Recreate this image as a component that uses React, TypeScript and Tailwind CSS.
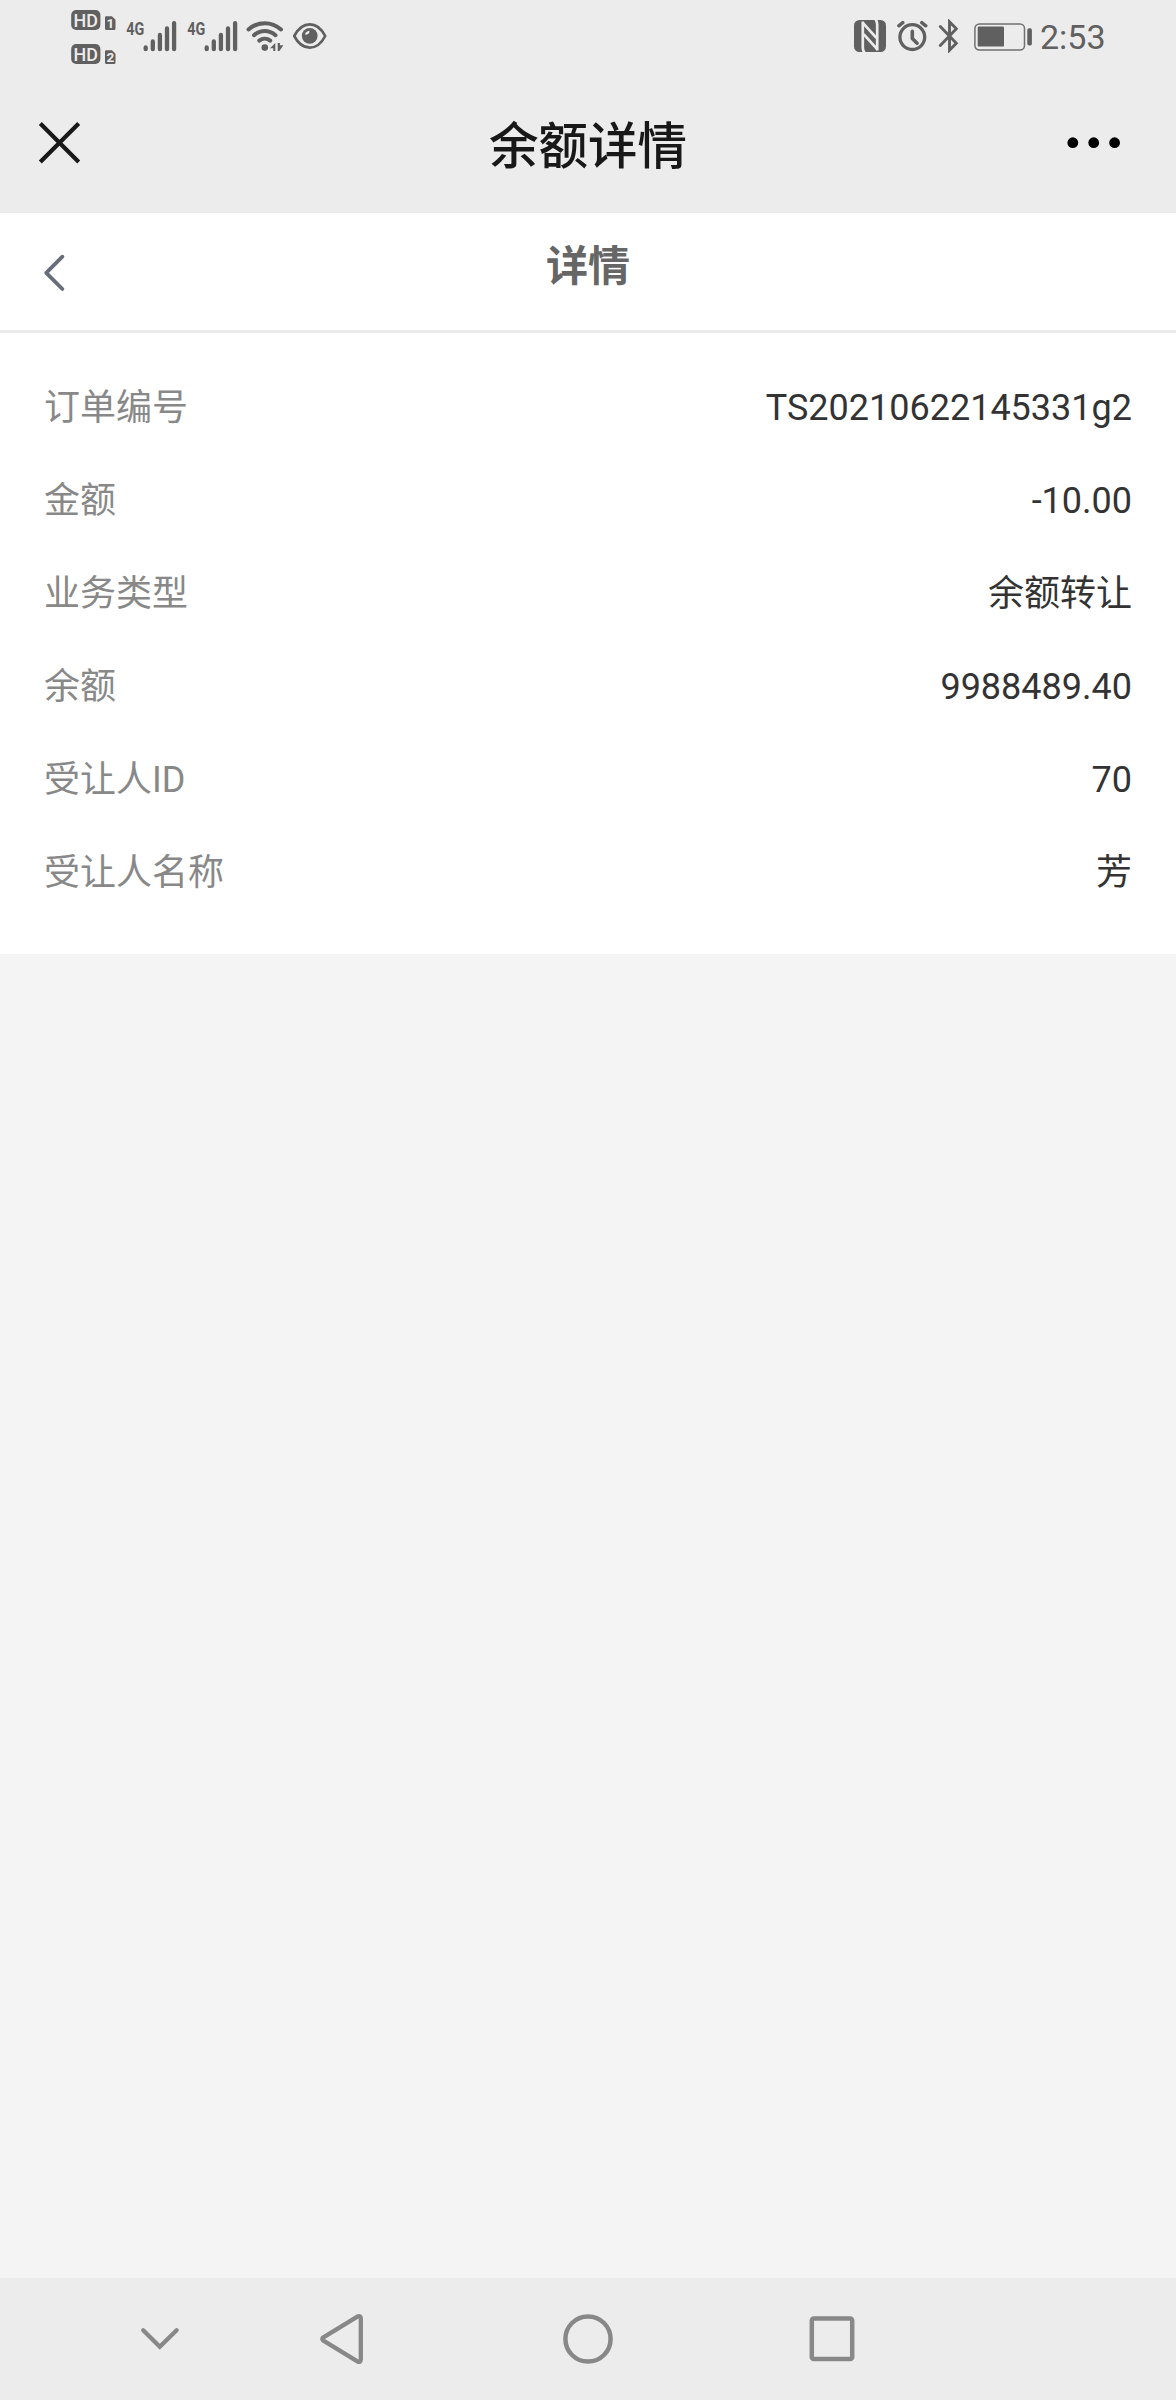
const details = [
  { label: "订单编号", value: "TS20210622145331g2" },
  { label: "金额", value: "-10.00" },
  { label: "业务类型", value: "余额转让" },
  { label: "余额", value: "9988489.40" },
  { label: "受让人ID", value: "70" },
  { label: "受让人名称", value: "芳" },
];

function HdBadge({ sim }: { sim: string }) {
  return (
    <svg width="46" height="21" viewBox="0 0 46 21" className="block overflow-visible">
      <rect x="0.2" y="0" width="29.2" height="20" rx="5" fill="#606060" />
      <text x="14.8" y="16.8" textAnchor="middle" textLength="24.4" lengthAdjust="spacingAndGlyphs" fontFamily="Roboto" fontWeight="500" fontSize="19" fill="#ececec">HD</text>
      <path d="M34 7.5q0-1.3 1.3-1.3h5.6l3.6 3.6v8.8q0 1.5-1.5 1.5h-7.5q-1.5 0-1.5-1.5z" fill="#606060" />
      <text x="39.3" y="18" textAnchor="middle" fontFamily="Roboto" fontWeight="700" fontSize="13.5" fill="#ececec">{sim}</text>
    </svg>
  );
}

function Signal() {
  return (
    <svg width="52" height="34" viewBox="0 0 52 34" className="block overflow-visible">
      <text x="0.3" y="14.8" textLength="18" lengthAdjust="spacingAndGlyphs" fontFamily="Roboto" fontWeight="700" fontSize="18.5" fill="#606060">4G</text>
      <g stroke="#606060" strokeWidth="4.3" strokeLinecap="round">
        <path d="M19.7 27.5v1.7M26.8 21.4v7.8M33.9 15v14.2M41 8.4v20.8M48.1 3.1v26.1" />
      </g>
    </svg>
  );
}

function WifiIcon() {
  return (
    <svg width="38" height="34" viewBox="246 20 38 34" className="block" fill="none">
      <g stroke="#606060" strokeWidth="4" strokeLinecap="round">
        <path d="M248.5 29.5C258 21 271.5 21 281 29.5" />
        <path d="M254 35.2C260.5 29.7 269 29.7 275.5 35.2" />
        <path d="M259.2 40.6C262.5 38 267 38 270.3 40.6" />
      </g>
      <circle cx="264.8" cy="47.6" r="3.3" fill="#606060" />
      <path d="M270 48.2l5.3-5.2v8h-2v-2.8zM277.7 43l2.2 0 0 2.2h3.5l-4 5.8h-1.7z" fill="#606060" />
    </svg>
  );
}

function EyeIcon() {
  return (
    <svg width="34" height="34" viewBox="293 19 34 34" className="block" fill="none">
      <path d="M294.2 36C302.3 20.5 317.3 20.5 325.2 36C317.3 51.5 302.3 51.5 294.2 36Z" stroke="#606060" strokeWidth="2.7" strokeLinejoin="round" />
      <circle cx="309.7" cy="35.8" r="7.9" fill="#606060" />
      <path d="M305 34.6C305.4 32.3 307 31.2 309.4 30.8C309.9 33 307.6 35.2 305 34.6Z" fill="#ececec" />
    </svg>
  );
}

function NfcIcon() {
  return (
    <svg width="32" height="32" viewBox="0 0 32 32" className="block">
      <rect width="32" height="32" rx="5.5" fill="#606060" />
      <g fill="none" stroke="#ececec" strokeWidth="2.7">
        <path d="M8.8 1.5V27.5Q8.8 30.5 10.6 33" />
        <path d="M23.2 30.5V4.5Q23.2 1.5 21.4 -1" />
        <path d="M8.6 2.6L22.4 17.8" />
        <path d="M9.6 14.2L23.4 29.4" />
      </g>
    </svg>
  );
}

function AlarmIcon() {
  return (
    <svg width="32" height="32" viewBox="0 0 32 32" className="block" fill="none" stroke="#606060" strokeLinecap="round" strokeLinejoin="round">
      <circle cx="15.3" cy="17.1" r="12.4" strokeWidth="3.3" />
      <path d="M15.3 11.4v7l4.8 4.8" strokeWidth="3.6" />
      <path d="M1.8 5.8L5.8 2.6M28.8 5.8L24.8 2.6" strokeWidth="3.4" />
    </svg>
  );
}

function BluetoothIcon() {
  return (
    <svg width="22" height="34" viewBox="0 0 22 34" className="block" fill="none" stroke="#606060" strokeWidth="2.9" strokeLinecap="round">
      <path d="M2.3 7.6L18.3 24.2L11.5 31.2V2.8L18.3 9.8L2.3 26.4" />
    </svg>
  );
}

function BatteryIcon() {
  return (
    <svg width="59" height="28" viewBox="0 0 59 28" className="block">
      <rect x="0.9" y="0.9" width="49.6" height="26.2" rx="4.5" fill="none" stroke="#707070" strokeWidth="1.5" />
      <rect x="3.7" y="3.6" width="26.3" height="20" rx="1.2" fill="#606060" />
      <rect x="53.3" y="5.3" width="4.6" height="17.3" rx="1.8" fill="#606060" />
    </svg>
  );
}

export default function App() {
  return (
    <div className="flex h-[2400px] w-[1176px] flex-col bg-[#f4f4f4] font-[Roboto,'Noto_Sans_CJK_SC',sans-serif]">
      <header className="bg-[#ececec]">
        <div className="flex h-[75px] items-start justify-between pl-[71px] pr-[70.5px]">
          <div className="flex items-start">
            <div className="flex flex-col gap-[13px] pt-[9.5px]">
              <HdBadge sim="1" />
              <HdBadge sim="2" />
            </div>
            <div className="ml-[9px] flex gap-[9px] pt-5">
              <Signal />
              <Signal />
            </div>
            <div className="ml-[7px] pt-5">
              <WifiIcon />
            </div>
            <div className="ml-[9px] pt-[19px]">
              <EyeIcon />
            </div>
          </div>
          <div className="flex items-start">
            <div className="pt-5">
              <NfcIcon />
            </div>
            <div className="ml-[11px] pt-5">
              <AlarmIcon />
            </div>
            <div className="ml-[9px] pt-[19px]">
              <BluetoothIcon />
            </div>
            <div className="ml-[13.5px] pt-[22.5px]">
              <BatteryIcon />
            </div>
            <span className="ml-[7px] mt-[17px] text-[34px] leading-10 text-[#606060]">2:53</span>
          </div>
        </div>
        <div className="grid h-[138px] grid-cols-3 items-center px-[38px]">
          <svg width="43" height="43" viewBox="0 0 43 43" className="-mt-[3px] block" stroke="#181818" strokeWidth="4.2">
            <path d="M2.3 2.6L40.7 41M40.7 2.6L2.3 41" />
          </svg>
          <h1 className="mt-[5px] text-center text-[49.5px] font-medium leading-[72px] text-[#181818]">余额详情</h1>
          <svg width="72" height="12" viewBox="0 0 72 12" className="-mt-0.5 block justify-self-end">
            <circle cx="6.8" cy="5.7" r="5.4" />
            <circle cx="27.7" cy="5.7" r="5.4" />
            <circle cx="48.6" cy="5.7" r="5.4" />
          </svg>
        </div>
      </header>
      <div className="grid h-[120px] grid-cols-3 border-b-[3px] border-[#ebebeb] bg-white">
        <svg width="24" height="38" viewBox="0 0 24 38" className="ml-[42px] mt-[41px] block" fill="none" stroke="#676d7a" strokeWidth="3.8" strokeLinecap="round" strokeLinejoin="round">
          <path d="M20.4 2.7L4.2 18.8L20.4 35" />
        </svg>
        <h2 className="mt-6 text-center text-[42px] font-bold leading-[60px] text-[#666]">详情</h2>
      </div>
      <main className="h-[621px] bg-white px-11 pt-7">
        {details.map((row) => (
          <div key={row.label} className="flex h-[93px] items-center justify-between text-[36px] leading-[54px]">
            <span className="text-[#888]">{row.label}</span>
            <span className="text-[#333]">{row.value}</span>
          </div>
        ))}
      </main>
      <nav className="mt-auto flex h-[122px] items-center bg-[#ececec] pl-[138px]">
        <svg width="44" height="52" viewBox="138 2313 44 52" className="block" fill="none" stroke="#888" strokeWidth="4.3" strokeLinecap="round">
          <path d="M143.2 2330.2L159.8 2346.8L176.6 2330.2" />
        </svg>
        <svg width="48" height="52" viewBox="318 2313 48 52" className="ml-[136px] block" fill="none" stroke="#888" strokeWidth="4.3" strokeLinejoin="round">
          <path d="M323.4 2337.3L357.4 2316.6Q360.8 2315.2 360.8 2318.7V2359.3Q360.8 2362.8 357.4 2361.4L323.4 2340.7Q321.2 2339 323.4 2337.3Z" />
        </svg>
        <svg width="52" height="52" viewBox="562 2313 52 52" className="ml-[196px] block" fill="none" stroke="#888" strokeWidth="4.5">
          <circle cx="588" cy="2339" r="22.6" />
        </svg>
        <svg width="48" height="52" viewBox="808 2313 48 52" className="ml-[194px] block" fill="none" stroke="#888" strokeWidth="4.5">
          <rect x="811.8" y="2318.5" width="40.4" height="40.6" rx="2" />
        </svg>
      </nav>
    </div>
  );
}
